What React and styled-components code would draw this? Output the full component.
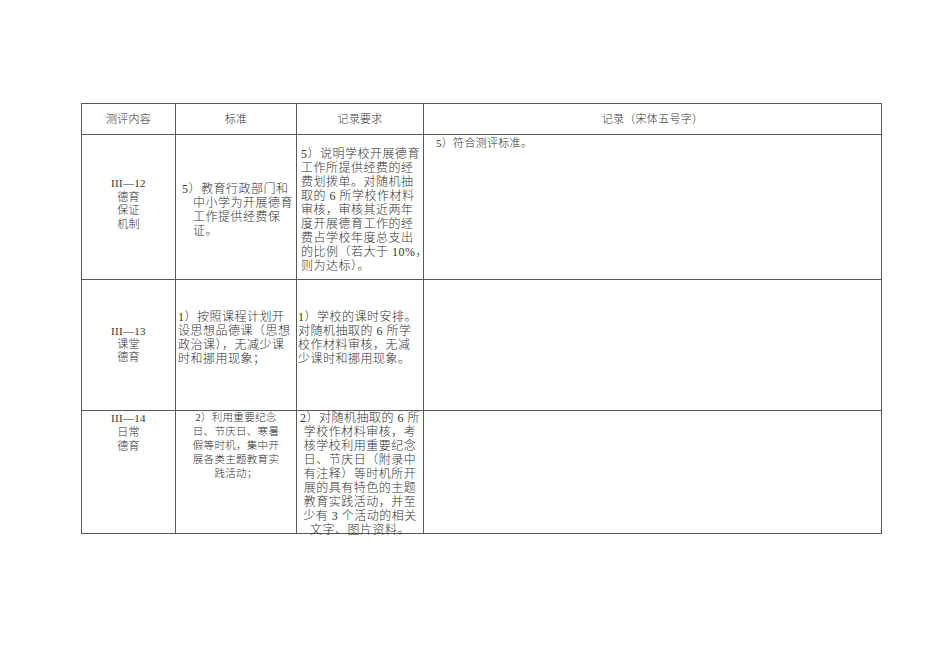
import styled, { createGlobalStyle } from "styled-components";

const GlobalStyle = createGlobalStyle`
  html, body {
    margin: 0;
    padding: 0;
    background: #ffffff;
  }
  body {
    font-family: "Liberation Serif", "Noto Sans CJK SC", serif;
    color: #333333;
  }
`;

const Page = styled.div`
  width: 950px;
  height: 672px;
  box-sizing: border-box;
  padding: 103px 0 0 81px;
  background: #ffffff;
`;

const Sheet = styled.div`
  display: grid;
  grid-template-columns: 94px 121px 127px 458px;
  grid-template-rows: 31px 145px 131px 123px;
  width: 801px;
  box-sizing: border-box;
  border-top: 1px solid #5a5a5a;
  border-left: 1px solid #5a5a5a;
`;

const Cell = styled.div`
  box-sizing: border-box;
  border-right: 1px solid #5a5a5a;
  border-bottom: 1px solid #5a5a5a;
  display: flex;
  flex-direction: column;
  justify-content: ${(p) => (p.$valign === "top" ? "flex-start" : "center")};
  align-items: ${(p) => (p.$align === "left" ? "flex-start" : "center")};
  padding: ${(p) => `${p.$pt || 0}px 0 ${p.$pb || 0}px ${p.$pl || 0}px`};
  font-size: ${(p) => p.$size || 12}px;
  font-weight: 300;
  letter-spacing: ${(p) => (p.$size ? 0.3 : 0.5)}px;
  line-height: ${(p) => p.$lh || 14}px;
  color: #333333;
  min-width: 0;
`;

const Line = styled.div`
  white-space: nowrap;
  margin-left: ${(p) => p.$indent || 0}px;
`;

const Lines = ({ items, first }) =>
  items.map((text, i) => (
    <Line key={i} $indent={i === 0 ? first : 0}>
      {text}
    </Line>
  ));

const header = ["测评内容", "标准", "记录要求", "记录（宋体五号字）"];

export default function App() {
  return (
    <Page>
      <GlobalStyle />
      <Sheet>
        {header.map((h) => (
          <Cell key={h} $size={11}>
            {h}
          </Cell>
        ))}

        <Cell $size={11} $lh={13.5} $pb={6}>
          <Lines items={["III—12", "德育", "保证", "机制"]} />
        </Cell>
        <Cell $align="left" $pl={17} $pt={5}>
          <Lines
            first={-11}
            items={["5）教育行政部门和", "中小学为开展德育", "工作提供经费保", "证。"]}
          />
        </Cell>
        <Cell $align="left" $pl={4} $pt={5}>
          <Lines
            items={[
              "5）说明学校开展德育",
              "工作所提供经费的经",
              "费划拨单。对随机抽",
              "取的 6 所学校作材料",
              "审核，审核其近两年",
              "度开展德育工作的经",
              "费占学校年度总支出",
              "的比例（若大于 10%，",
              "则为达标）。",
            ]}
          />
        </Cell>
        <Cell $valign="top" $align="left" $pl={12} $pt={1} $size={11}>
          <Lines items={["5）符合测评标准。"]} />
        </Cell>

        <Cell $size={11} $lh={13} $pb={2}>
          <Lines items={["III—13", "课堂", "德育"]} />
        </Cell>
        <Cell $align="left" $pl={2} $pb={14}>
          <Lines
            items={["1）按照课程计划开", "设思想品德课（思想", "政治课），无减少课", "时和挪用现象；"]}
          />
        </Cell>
        <Cell $align="left" $pl={1} $pb={14}>
          <Lines
            items={["1）学校的课时安排。", "对随机抽取的 6 所学", "校作材料审核，无减", "少课时和挪用现象。"]}
          />
        </Cell>
        <Cell />

        <Cell $valign="top" $size={11} $lh={14}>
          <Lines items={["III—14", "日常", "德育"]} />
        </Cell>
        <Cell $valign="top" $size={10.5}>
          <Lines
            items={["2）利用重要纪念", "日、节庆日、寒暑", "假等时机，集中开", "展各类主题教育实", "践活动；"]}
          />
        </Cell>
        <Cell $valign="top">
          <Lines
            items={[
              "2）对随机抽取的 6 所",
              "学校作材料审核，考",
              "核学校利用重要纪念",
              "日、节庆日（附录中",
              "有注释）等时机所开",
              "展的具有特色的主题",
              "教育实践活动，并至",
              "少有 3 个活动的相关",
              "文字、图片资料。",
            ]}
          />
        </Cell>
        <Cell />
      </Sheet>
    </Page>
  );
}
